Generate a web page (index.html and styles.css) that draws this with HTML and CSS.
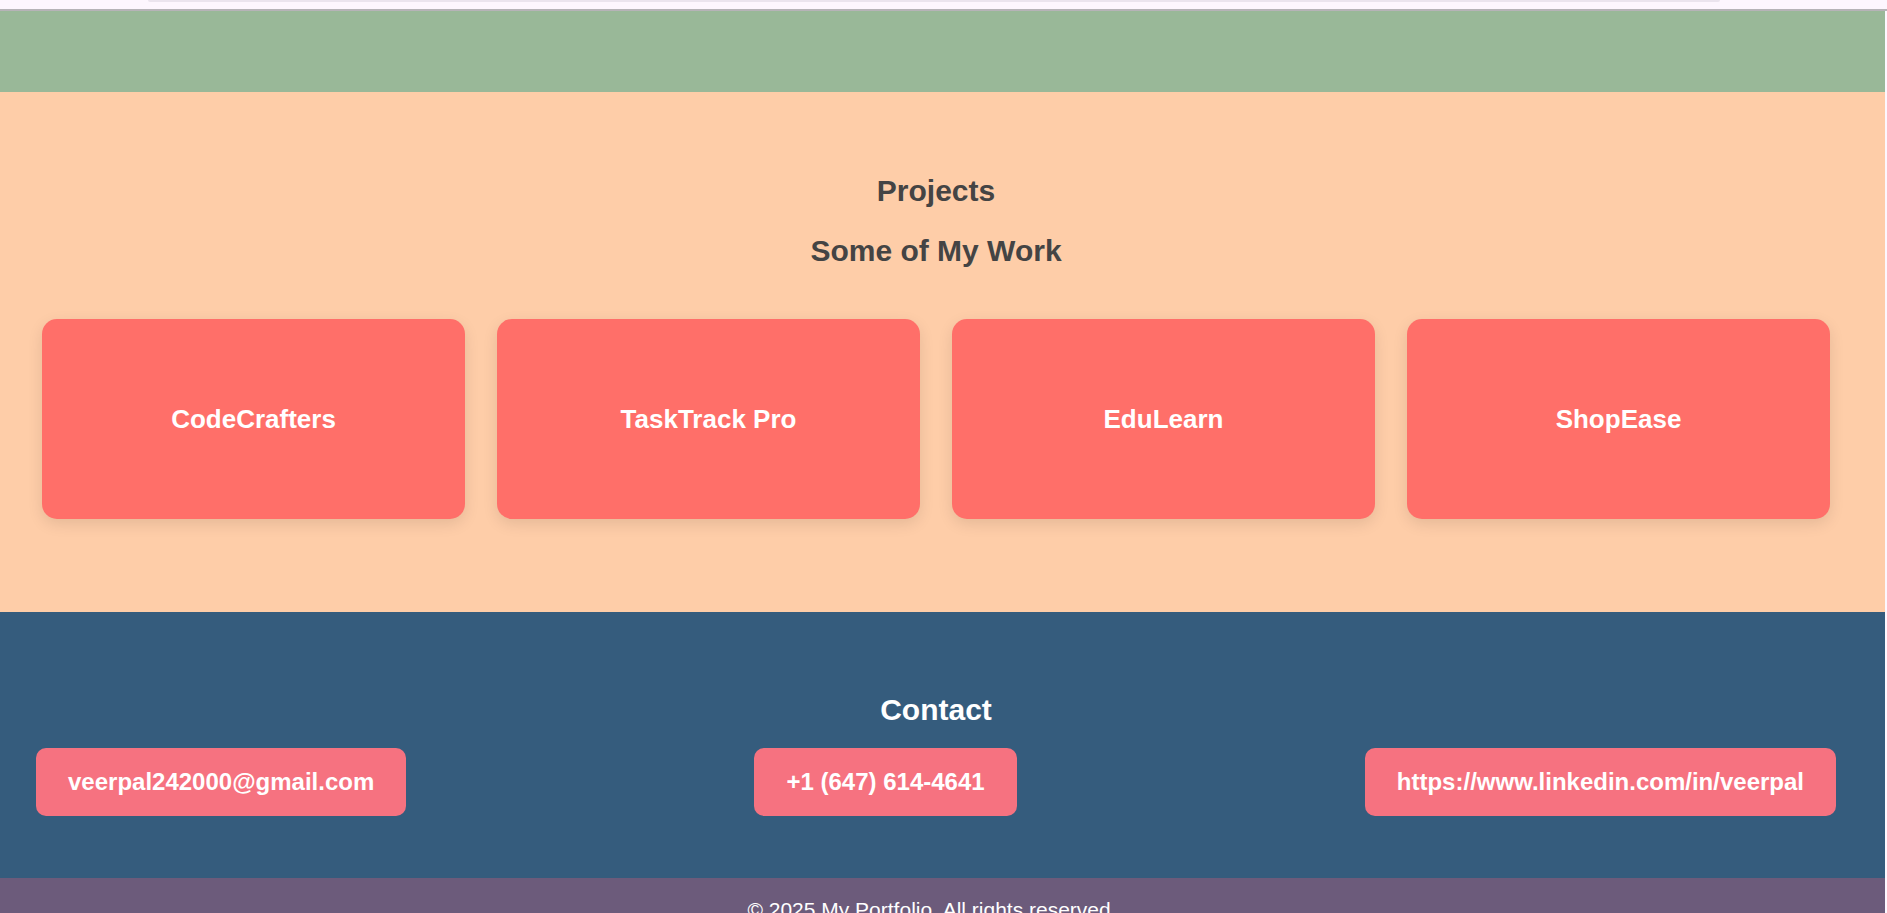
FILE: index.html
```html
<!DOCTYPE html>
<html lang="en">
<head>
<meta charset="utf-8">
<title>My Portfolio</title>
<link rel="stylesheet" href="styles.css">
</head>
<body>
<header class="topbar">
  <div class="topbar-pill"></div>
</header>
<main class="page">
  <section class="hero"></section>
  <section class="projects">
    <h2 class="section-title">Projects</h2>
    <h2 class="section-subtitle">Some of My Work</h2>
    <div class="project-grid">
      <div class="project-card"><h3>CodeCrafters</h3></div>
      <div class="project-card"><h3>TaskTrack Pro</h3></div>
      <div class="project-card"><h3>EduLearn</h3></div>
      <div class="project-card"><h3>ShopEase</h3></div>
    </div>
  </section>
  <section class="contact">
    <h2 class="contact-title">Contact</h2>
    <div class="contact-links">
      <a class="contact-btn" href="#">veerpal242000@gmail.com</a>
      <a class="contact-btn" href="#">+1 (647) 614-4641</a>
      <a class="contact-btn" href="#">https://www.linkedin.com/in/veerpal</a>
    </div>
  </section>
  <footer class="footer">
    <p>© 2025 My Portfolio. All rights reserved.</p>
  </footer>
</main>
</body>
</html>
```

FILE: styles.css
```css
* {
  box-sizing: border-box;
}

html, body {
  margin: 0;
  padding: 0;
}

body {
  background: #fdf7fe;
  font-family: "Liberation Sans", Arial, sans-serif;
  overflow: hidden;
}

.topbar {
  height: 11px;
  background: #fdf6fe;
  border-bottom: 2px solid #b6b3b7;
}

.topbar-pill {
  height: 2px;
  margin: 0 167px 0 148px;
  background: #ebe4ee;
  border-radius: 0 0 4px 4px;
}

.page {
  margin-right: 2px;
}

.hero {
  height: 81px;
  background: #99b898;
}

.projects {
  background: #fecda8;
  padding: 82px 55px 93px 42px;
  text-align: center;
}

.section-title,
.section-subtitle,
.contact-title {
  margin: 0;
  font-size: 30px;
  font-weight: 700;
  line-height: normal;
}

.section-title,
.section-subtitle {
  color: #444444;
}

.section-subtitle {
  margin: 26px 0 51px;
}

.project-grid {
  display: grid;
  grid-template-columns: repeat(4, 1fr);
  gap: 32px;
}

.project-card {
  height: 200px;
  background: #ff6f69;
  border-radius: 15px;
  box-shadow: 0 5px 15px rgba(0, 0, 0, 0.1);
  display: flex;
  align-items: center;
  justify-content: center;
}

.project-card h3 {
  margin: 0;
  color: #ffffff;
  font-size: 26px;
  font-weight: 700;
}

.contact {
  background: #355c7d;
  padding: 81px 0 62px;
}

.contact-title {
  color: #ffffff;
  text-align: center;
  padding: 0 55px 0 42px;
  margin-bottom: 21px;
}

.contact-links {
  display: flex;
  justify-content: space-between;
  padding: 0 49px 0 36px;
}

.contact-btn {
  display: block;
  background: #f67280;
  color: #ffffff;
  text-decoration: none;
  font-size: 24px;
  font-weight: 700;
  line-height: normal;
  padding: 20px 32px;
  border-radius: 10px;
}

.footer {
  background: #6c5b7b;
  padding: 20px 0 20px;
  text-align: center;
}

.footer p {
  margin: 0;
  color: #ffffff;
  font-size: 21px;
  padding-right: 21px;
}
```
